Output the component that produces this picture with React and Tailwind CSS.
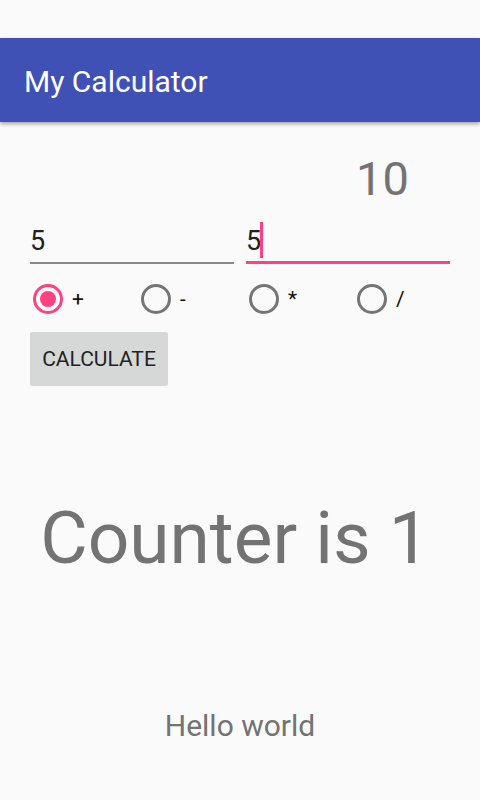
export default function App() {
  const font = { fontFamily: "Roboto, 'Noto Sans', sans-serif" };
  const ops = ["+", "-", "*", "/"];
  return (
    <div className="w-[480px] h-[800px] bg-[#fafafa] overflow-hidden" style={font}>
      <div className="mt-[38px] h-[84px] bg-[#3F51B5] pt-[29px] pl-[24px] shadow-[0_2px_4px_rgba(0,0,0,0.35)] relative">
        <div className="text-[30px] leading-none text-white">My Calculator</div>
      </div>
      <div className="px-[30px]">
        <div className="mt-[33px] ml-[326px] text-[47px] leading-none text-[#737373]">10</div>
        <div className="mt-[20px] flex gap-[12px]">
          <div className="w-[204px] h-[42px] border-b-2 border-[#8a8a8a] pt-[6px]">
            <div className="text-[27px] leading-none text-[#212121]">5</div>
          </div>
          <div className="relative w-[204px] h-[42px] border-b-[3px] border-[#FF4081] pt-[6px]">
            <div className="text-[27px] leading-none text-[#212121]">5</div>
            <div className="absolute left-[14px] top-0 w-[3px] h-[36px] bg-[#FF4081]" />
          </div>
        </div>
        <div className="mt-[20px] flex h-[30px]">
          {ops.map((op, i) => (
            <div key={op} className="w-[108px] shrink-0 flex items-center">
              <div
                className={
                  i === 0
                    ? "ml-[3px] w-[30px] h-[30px] rounded-full border-[3px] border-[#FF4081] flex items-center justify-center"
                    : "ml-[3px] w-[30px] h-[30px] rounded-full border-[3px] border-[#757575]"
                }
              >
                {i === 0 && <div className="w-[16px] h-[16px] rounded-full bg-[#FF4081]" />}
              </div>
              <div className="ml-[9px] text-[21px] leading-none text-[#111]">{op}</div>
            </div>
          ))}
        </div>
        <div className="mt-[18px] w-[138px] h-[54px] rounded-[2px] bg-[#d6d7d7] flex items-center justify-center text-[21px] leading-none text-[#222]">
          CALCULATE
        </div>
      </div>
      <div className="mt-[116px] text-center pr-[10px] text-[73px] leading-none text-[#737373]">Counter is 1</div>
      <div className="mt-[136px] text-center text-[30px] leading-none text-[#737373]">Hello world</div>
    </div>
  );
}
